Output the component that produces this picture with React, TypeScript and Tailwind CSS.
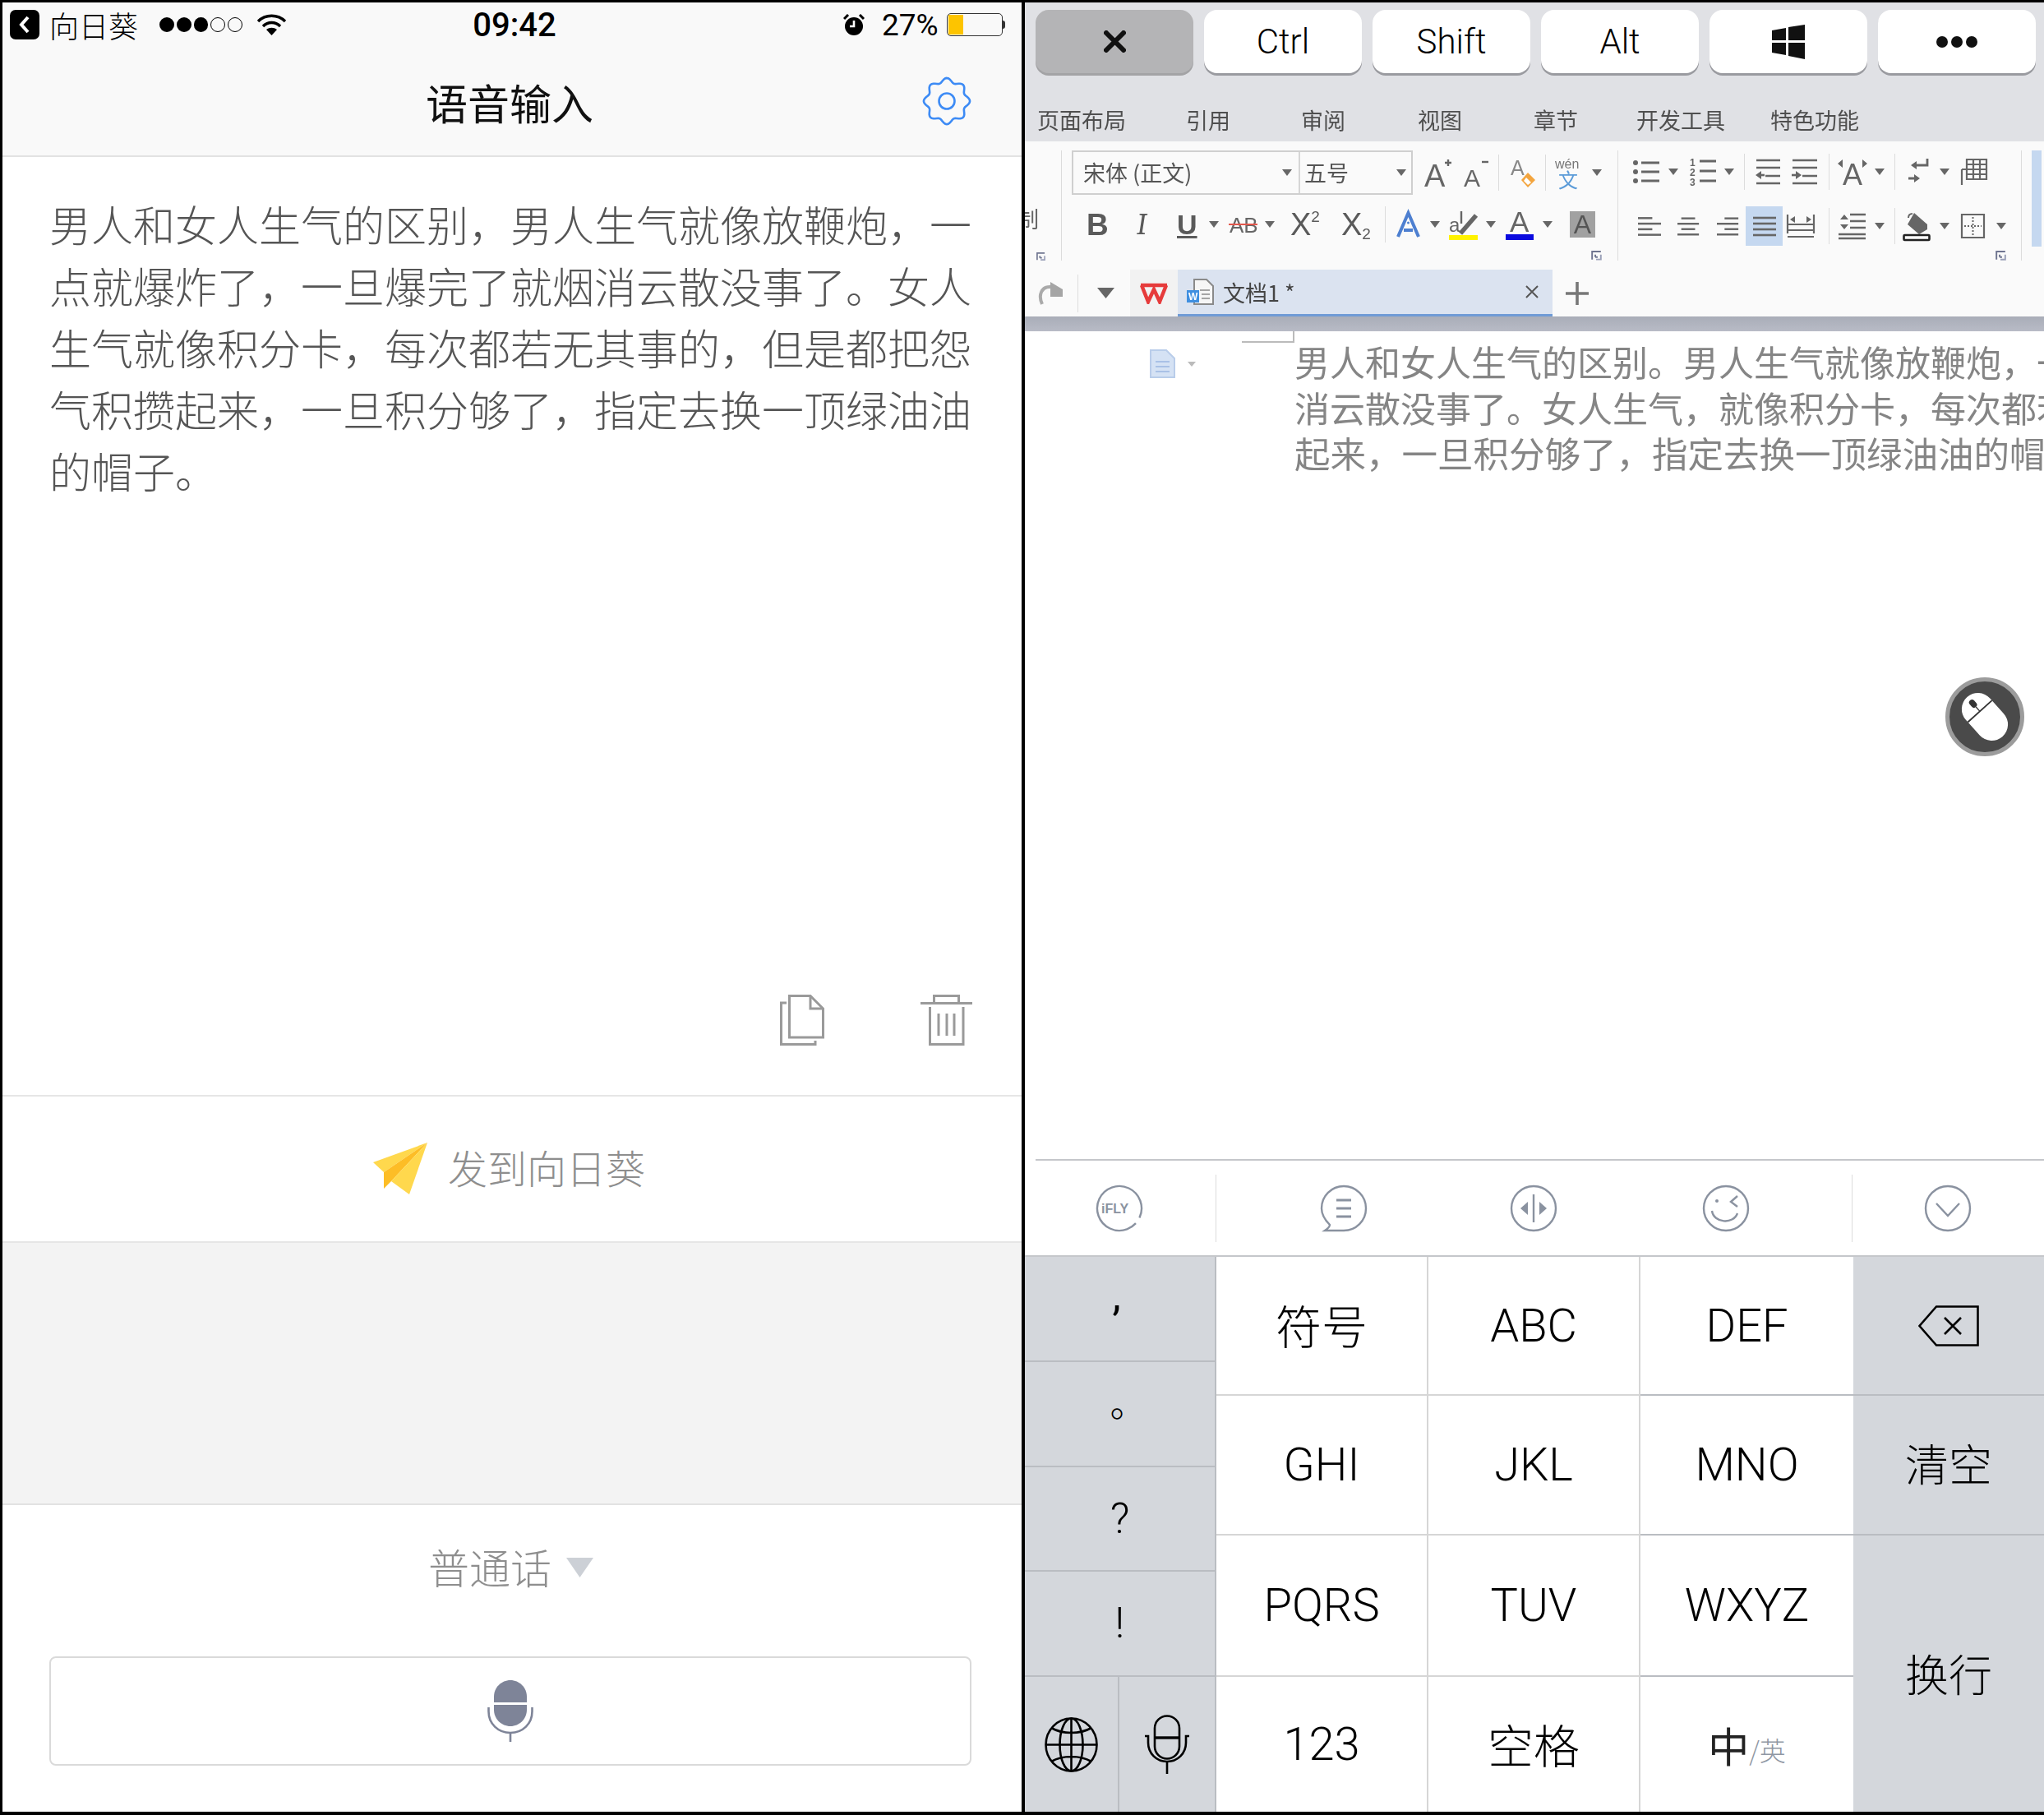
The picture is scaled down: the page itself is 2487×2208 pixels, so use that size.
import React from 'react'

const cjk = "[font-family:'Noto_Sans_CJK_SC',sans-serif]"
const keyFont = "[font-family:Roboto,'Noto_Sans_CJK_SC',sans-serif] font-light"

// gear outline with eight soft teeth
const gearPath = Array.from({ length: 96 }, (_, i) => {
  const t = (i / 96) * Math.PI * 2
  const r = 25.5 + 2.6 * Math.cos(8 * t)
  return `${i === 0 ? 'M' : 'L'}${(30 + r * Math.sin(t)).toFixed(2)} ${(30 - r * Math.cos(t)).toFixed(2)}`
}).join(' ') + 'Z'

const G = '#666666'

function Arrow({ className = '' }: { className?: string }) {
  return (
    <svg width="12" height="8" viewBox="0 0 12 8" className={`shrink-0 ${className}`}>
      <path d="M0 0H12L6 8Z" fill={G} />
    </svg>
  )
}

function Divider({ className = '' }: { className?: string }) {
  return <div className={`w-px h-[44px] bg-[#dcdcdc] shrink-0 ${className}`} />
}

function Launcher({ className = '' }: { className?: string }) {
  return (
    <svg width="13" height="12" viewBox="0 0 13 12" className={className}>
      <path d="M1 11V1H12M5 8V5M5 8H8" stroke="#6f7590" strokeWidth="2" fill="none" />
      <path d="M12 5V11H6" stroke="#9aa0b8" strokeWidth="2" fill="none" />
    </svg>
  )
}

function Glyph({ w, h, children, className = '' }: { w: number; h: number; children: React.ReactNode; className?: string }) {
  return (
    <svg width={w} height={h} viewBox={`0 0 ${w} ${h}`} className={`shrink-0 overflow-visible ${className}`}>
      {children}
    </svg>
  )
}

function TextLines({ rows, className = '' }: { rows: number[][]; className?: string }) {
  return (
    <Glyph w={30} h={26} className={className}>
      {rows.map((r, i) => (
        <path key={i} d={`M${r[0]} ${r[2]}H${r[1]}`} stroke={G} strokeWidth="2.6" />
      ))}
    </Glyph>
  )
}

function CircleIcon({ children, className = '' }: { children: React.ReactNode; className?: string }) {
  return (
    <svg width="58" height="58" viewBox="0 0 58 58" fill="none" stroke="#8a92a0" strokeWidth="2.4" className={`shrink-0 ${className}`}>
      {children}
    </svg>
  )
}

function Key({ children, className = '' }: { children: React.ReactNode; className?: string }) {
  return <div className={`flex items-center justify-center text-black ${className}`}>{children}</div>
}

function StatusBar() {
  return (
    <div className="h-[54px] flex items-center text-black text-[36px] leading-none">
      <div className="ml-[9px] w-[36px] h-[36px] rounded-[7px] bg-black flex items-center justify-center">
        <svg width="14" height="24" viewBox="0 0 14 24" fill="none" stroke="#fff" strokeWidth="4">
          <path d="M11 3L3 12L11 21" />
        </svg>
      </div>
      <span className={`ml-[12px] w-[110px] ${cjk} font-light whitespace-nowrap`}>向日葵</span>
      <div className="ml-[24px] w-[101px] flex gap-[3px]">
        {[0, 1, 2].map(i => <span key={i} className="w-[18px] h-[18px] rounded-full bg-black" />)}
        {[0, 1].map(i => <span key={i} className="w-[18px] h-[18px] rounded-full border border-black" />)}
      </div>
      <svg width="37" height="27" viewBox="0 0 37 27" fill="none" stroke="#000" strokeWidth="3.4" className="ml-[17px]">
        <path d="M2 9C11 0 26 0 35 9" />
        <path d="M8 15C14 9 23 9 29 15" />
        <path d="M18.5 26L12 19C16 16 21 16 25 19Z" fill="#000" stroke="none" />
      </svg>
      <span className="ml-[225px] w-[104px] pt-[2px] font-medium [font-family:Roboto,sans-serif] text-[40px] text-center whitespace-nowrap">09:42</span>
      <svg width="26" height="27" viewBox="0 0 26 27" className="ml-[348px]">
        <circle cx="13" cy="15" r="11" fill="#000" />
        <path d="M13 8V15H8" stroke="#fff" strokeWidth="2.6" fill="none" />
        <path d="M1 6L6 1M25 6L20 1" stroke="#000" strokeWidth="3" />
      </svg>
      <span className="ml-[21px] w-[68px] [font-family:Roboto,sans-serif] font-normal text-[37px] text-center whitespace-nowrap">27%</span>
      <div className="ml-[11px] flex items-center">
        <div className="w-[68px] h-[28px] rounded-[5px] border-[1.5px] border-[#333] p-[1px] flex">
          <div className="w-[18px] bg-[#fdc400]" />
        </div>
        <div className="w-[3px] h-[10px] bg-[#333] rounded-r-sm" />
      </div>
    </div>
  )
}

function LeftPanel() {
  return (
    <div className="w-[1240px] h-[2201px] bg-white flex flex-col shrink-0">
      <div className="h-[188px] bg-[#f9f9f9] border-b-2 border-[#e2e2e2] shrink-0">
        <StatusBar />
        <div className="h-[132px] flex items-center">
          <h1 className={`ml-[515px] w-[204px] pt-[2px] text-[51px] leading-none text-[#111] whitespace-nowrap ${cjk}`}>语音输入</h1>
          <svg width="60" height="60" viewBox="0 0 60 60" fill="none" stroke="#3d8bf5" strokeWidth="2.6" className="ml-[400px]">
            <path d={gearPath} />
            <circle cx="30" cy="30" r="9.5" />
          </svg>
        </div>
      </div>

      <div className="h-[1141px] flex flex-col shrink-0">
        <p className={`ml-[57px] mt-[44px] w-[1124px] text-[51px] leading-[75px] text-[#555] font-light ${cjk}`}>
          男人和女人生气的区别，男人生气就像放鞭炮，一点就爆炸了，一旦爆完了就烟消云散没事了。女人生气就像积分卡，每次都若无其事的，但是都把怨气积攒起来，一旦积分够了，指定去换一顶绿油油的帽子。
        </p>
        <div className="mt-auto mb-[60px] flex items-end">
          <svg width="54" height="62" viewBox="0 0 54 62" fill="none" stroke="#9a9a9a" strokeWidth="3" className="ml-[946px]">
            <path d="M11.5 1.5H37L52.5 17V52H11.5Z" />
            <path d="M37 1.5V17H52.5" />
            <path d="M8 10H1.5V60.5H43V56" />
          </svg>
          <svg width="63" height="62" viewBox="0 0 63 62" fill="none" stroke="#9a9a9a" strokeWidth="3" className="ml-[117px]">
            <path d="M0 10.5H63" />
            <path d="M16.5 10V1.5H46.5V10" />
            <path d="M11.5 15V60.5H52V15" />
            <path d="M22 23V50M32 23V50M41 23V50" />
          </svg>
        </div>
      </div>

      <div className="h-[180px] border-t-2 border-b-2 border-[#e6e6e6] flex items-center justify-center pr-[7px] shrink-0">
        <svg width="66" height="63" viewBox="0 0 66 63" className="mr-[25px] mb-[2px]">
          <path d="M66 0L0 24L13 36Z" fill="#ffd84d" />
          <path d="M66 0L13 36V56L22 47Z" fill="#fdbd26" />
          <path d="M66 0L22 47L44 63Z" fill="#ffd84d" />
        </svg>
        <span className={`text-[48px] leading-none text-[#8e8e8e] font-light whitespace-nowrap pb-[7px] ${cjk}`}>发到向日葵</span>
      </div>

      <div className="h-[317px] bg-[#f3f3f3] shrink-0" />

      <div className="flex-1 border-t-2 border-[#e2e2e2] flex flex-col">
        <div className="h-[184px] flex items-center justify-center pb-[24px] pr-[3px]">
          <span className={`text-[50px] leading-none text-[#8e8e8e] font-light whitespace-nowrap pb-[12px] ${cjk}`}>普通话</span>
          <svg width="33" height="24" viewBox="0 0 33 24" className="ml-[18px] mb-[8px]">
            <path d="M0 0H33L16.5 24Z" fill="#ccd0d6" />
          </svg>
        </div>
        <div className="ml-[57px] w-[1122px] h-[133px] border-2 border-[#dadada] rounded-[8px] flex items-center justify-center">
          <svg width="56" height="75" viewBox="0 0 56 75" fill="none">
            <path d="M8 27V20C8 9 17 0 28 0S48 9 48 20V27Z" fill="#7e8498" />
            <path d="M8 30V36C8 47 17 56 28 56S48 47 48 36V30Z" fill="#7e8498" />
            <path d="M1.5 33V38C1.5 53 13 64 28 64S54.5 53 54.5 38V33" stroke="#7e8498" strokeWidth="2.6" />
            <path d="M28 64V75" stroke="#7e8498" strokeWidth="2.6" />
          </svg>
        </div>
      </div>
    </div>
  )
}

function FontGroup() {
  return (
    <div className="w-[676px] h-[134px] flex flex-col shrink-0 text-[#5a5a5a]">
      <div className="h-[54px] flex items-center">
        <div className="ml-[12px] w-[415px] h-[54px] border-2 border-[#cfcfcf] flex items-center shrink-0">
          <div className={`w-[276px] h-full border-r-2 border-[#d6d6d6] flex items-center pl-[12px] text-[27px] text-[#555] ${cjk}`}>
            <span className="whitespace-nowrap">宋体 (正文)</span>
            <Arrow className="ml-auto mr-[8px]" />
          </div>
          <div className={`flex-1 flex items-center pl-[5px] text-[27px] text-[#555] ${cjk}`}>
            <span className="whitespace-nowrap">五号</span>
            <Arrow className="ml-auto mr-[6px]" />
          </div>
        </div>
        <Glyph w={32} h={36} className="ml-[15px]">
          <text x="-1" y="35" fontSize="38" fill={G} fontFamily="Liberation Sans">A</text>
          <path d="M24 6H32M28 2V10" stroke={G} strokeWidth="2.4" />
        </Glyph>
        <Glyph w={30} h={36} className="ml-[15px]">
          <text x="0" y="35" fontSize="30" fill={G} fontFamily="Liberation Sans">A</text>
          <path d="M22 5H30" stroke={G} strokeWidth="2.4" />
        </Glyph>
        <Divider className="ml-[12px]" />
        <Glyph w={30} h={36} className="ml-[14px]">
          <text x="0" y="21" fontSize="25" fill="#888" fontFamily="Liberation Sans">A</text>
          <path d="M21 18L30 27L21 36L13 27Z" fill="#f3a53f" />
          <path d="M19 24L25 30L21 33L16 28Z" fill="#fff" />
        </Glyph>
        <Divider className="ml-[12px]" />
        <Glyph w={32} h={38} className="ml-[11px]">
          <text x="0" y="14" fontSize="16" fill="#777" fontFamily="Liberation Sans">wén</text>
          <text x="4" y="37" fontSize="24" fill="#5b9bd8" fontFamily="Noto Sans CJK SC">文</text>
        </Glyph>
        <Arrow className="ml-[13px]" />
      </div>
      <div className="mt-[13px] h-[48px] flex items-center [font-family:'Liberation_Sans',sans-serif]">
        <span className="ml-[30px] w-[22px] text-[37px] font-bold leading-none">B</span>
        <span className="ml-[39px] w-[18px] text-[37px] italic font-serif leading-none">I</span>
        <span className="ml-[31px] w-[24px] text-[34px] font-bold leading-none underline underline-offset-2">U</span>
        <Arrow className="ml-[15px]" />
        <Glyph w={35} h={30} className="ml-[12px]">
          <text x="1" y="25" fontSize="26" fill={G} fontFamily="Liberation Sans">AB</text>
          <path d="M0 15H35" stroke="#e2574c" strokeWidth="2" />
        </Glyph>
        <Arrow className="ml-[9px]" />
        <span className="ml-[19px] w-[35px] text-[38px] leading-none whitespace-nowrap">X<sup className="text-[19px] -top-[16px]">2</sup></span>
        <span className="ml-[27px] w-[34px] text-[38px] leading-none whitespace-nowrap">X<sub className="text-[19px]">2</sub></span>
        <Divider className="ml-[19px]" />
        <Glyph w={33} h={34} className="ml-[11px]">
          <path d="M4 32L16.5 3L29 32M11 24H22" stroke="#4d7fd0" strokeWidth="4" fill="none" />
          <circle cx="16.5" cy="15" r="1.5" fill="#4d7fd0" />
        </Glyph>
        <Arrow className="ml-[10px]" />
        <Glyph w={35} h={38} className="ml-[11px]">
          <text x="0" y="28" fontSize="24" fill={G} fontFamily="Liberation Sans">a</text>
          <path d="M14 30L33 8" stroke={G} strokeWidth="5.5" />
          <path d="M15 3V18" stroke={G} strokeWidth="2.4" />
          <path d="M0 32H35V38H0Z" fill="#fff200" />
        </Glyph>
        <Arrow className="ml-[10px]" />
        <Glyph w={34} h={38} className="ml-[12px]">
          <text x="5" y="28" fontSize="35" fill={G} fontFamily="Liberation Sans">A</text>
          <path d="M0 31H34V38H0Z" fill="#0a0adf" />
        </Glyph>
        <Arrow className="ml-[11px]" />
        <div className="ml-[21px] w-[31px] h-[32px] bg-[#a1a1a1] flex items-center justify-center text-[32px] leading-none text-[#555]">A</div>
      </div>
      <Launcher className="mt-[9px] ml-[644px]" />
    </div>
  )
}

function ParaGroup() {
  const al = (rows: number[][], className: string) => <TextLines rows={rows} className={className} />
  return (
    <div className="w-[490px] h-[134px] flex flex-col shrink-0">
      <div className="h-[54px] flex items-center">
        <Glyph w={33} h={32} className="ml-[17px]">
          <path d="M11 5H33M11 16H33M11 27H33" stroke={G} strokeWidth="2.8" />
          <circle cx="4" cy="5" r="3" fill={G} /><circle cx="4" cy="16" r="3" fill={G} /><circle cx="4" cy="27" r="3" fill={G} />
        </Glyph>
        <Arrow className="ml-[11px]" />
        <Glyph w={33} h={36} className="ml-[13px]">
          <path d="M13 5H33M13 17H33M13 29H33" stroke={G} strokeWidth="2.8" />
          <text x="1" y="11" fontSize="12" fontWeight="bold" fill={G} fontFamily="Liberation Sans">1</text>
          <text x="1" y="23" fontSize="12" fontWeight="bold" fill={G} fontFamily="Liberation Sans">2</text>
          <text x="1" y="35" fontSize="12" fontWeight="bold" fill={G} fontFamily="Liberation Sans">3</text>
        </Glyph>
        <Arrow className="ml-[10px]" />
        <Divider className="ml-[12px]" />
        <Glyph w={30} h={32} className="ml-[13px]">
          <path d="M1 2H30M1 11H30M12 21H30M1 30H30" stroke={G} strokeWidth="2.6" />
          <path d="M0 20L7 15V25Z" fill={G} /><path d="M6 20H11" stroke={G} strokeWidth="2.6" />
        </Glyph>
        <Glyph w={31} h={32} className="ml-[14px]">
          <path d="M1 2H31M1 11H31M13 21H31M1 30H31" stroke={G} strokeWidth="2.6" />
          <path d="M12 20L5 15V25Z" fill={G} /><path d="M0 20H6" stroke={G} strokeWidth="2.6" />
        </Glyph>
        <Divider className="ml-[14px]" />
        <Glyph w={36} h={34} className="ml-[10px]">
          <text x="6" y="33" fontSize="36" fill={G} fontFamily="Liberation Sans">A</text>
          <path d="M0 7L6 2V12ZM36 7L30 2V12Z" fill={G} />
        </Glyph>
        <Arrow className="ml-[9px]" />
        <Divider className="ml-[12px]" />
        <Glyph w={24} h={34} className="ml-[16px]">
          <path d="M23 1V9H9M0 25H8" stroke={G} strokeWidth="2.8" fill="none" />
          <path d="M3 9L10 4V14ZM14 25L7 20V30Z" fill={G} />
        </Glyph>
        <Arrow className="ml-[14px]" />
        <Glyph w={32} h={34} className="ml-[14px]">
          <path d="M7 2H31V26H7V2ZM1 14H31M1 14V33M7 14V26M15 2V26M23 2V26M7 8H31M7 20H31" stroke={G} strokeWidth="2.2" fill="none" />
        </Glyph>
      </div>
      <div className="mt-[16px] h-[48px] flex items-center">
        {al([[0, 18, 3], [0, 29, 10], [0, 18, 17], [0, 29, 24]], 'ml-[24px] w-[29px]')}
        {al([[5, 23, 3], [0, 28, 10], [5, 23, 17], [0, 28, 24]], 'ml-[19px] w-[28px]')}
        {al([[10, 28, 3], [0, 28, 10], [10, 28, 17], [0, 28, 24]], 'ml-[20px] w-[28px]')}
        <div className="ml-[7px] w-[45px] h-[48px] bg-[#c5d8f0] flex items-center justify-center shrink-0">
          <TextLines rows={[[1, 29, 3], [1, 29, 10], [1, 29, 17], [1, 29, 24]]} />
        </div>
        <Glyph w={34} h={30} className="ml-[5px]">
          <path d="M1 1V24M33 1V24M1 28H33M1 20H33M1 13H33" stroke={G} strokeWidth="2.2" />
          <path d="M4 7L10 3V11ZM30 7L24 3V11Z" fill={G} />
        </Glyph>
        <Divider className="ml-[17px]" />
        <Glyph w={33} h={32} className="ml-[11px]">
          <path d="M14 2H33M14 10H33M14 18H33M0 26H33M0 31H33" stroke={G} strokeWidth="2.4" />
          <path d="M2 8L7 2L12 8ZM2 14L7 20L12 14Z" fill={G} />
        </Glyph>
        <Arrow className="ml-[11px]" />
        <Divider className="ml-[12px]" />
        <Glyph w={35} h={36} className="ml-[9px]">
          <path d="M14 2L30 16V22L20 28L6 16Z" fill={G} />
          <path d="M7 8C7 4 10 3 12 3" stroke={G} strokeWidth="2" fill="none" />
          <rect x="1.5" y="29" width="31" height="6" rx="1" fill="#fff" stroke="#222" strokeWidth="2.6" />
        </Glyph>
        <Arrow className="ml-[10px]" />
        <Glyph w={29} h={30} className="ml-[14px]">
          <path d="M1 1H28V29H1Z" stroke={G} strokeWidth="2.2" fill="none" />
          <path d="M14.5 4V26M4 15H25" stroke={G} strokeWidth="2" strokeDasharray="2 2" />
        </Glyph>
        <Arrow className="ml-[14px]" />
      </div>
      <Launcher className="mt-[6px] ml-[459px]" />
    </div>
  )
}

function TabBar() {
  return (
    <div className={`h-[57px] flex items-center shrink-0 text-[#555] ${cjk}`}>
      <Glyph w={29} h={28} className="ml-[17px]">
        <path d="M4 27C-1 16 3 5 15 6" stroke="#aaa" strokeWidth="4" fill="none" />
        <path d="M14 0L29 9V18H14Z" fill="#a5a5a5" />
      </Glyph>
      <div className="ml-[18px] w-px h-[46px] bg-[#dedede]" />
      <svg width="21" height="13" viewBox="0 0 21 13" className="ml-[23px]"><path d="M0 0H21L10.5 13Z" fill={G} /></svg>
      <div className="ml-[19px] w-[58px] h-full bg-[#f2f2f2] flex items-center justify-center">
        <svg width="36" height="26" viewBox="0 0 36 26" fill="none" stroke="#e63b3b" strokeWidth="4.5">
          <path d="M2 3H34M3 3L11 23L18 8L25 23L33 3" />
        </svg>
      </div>
      <div className="w-[456px] h-full bg-[#dbe3f0] border-b-[3px] border-[#6f9bd6] flex items-center">
        <Glyph w={33} h={33} className="ml-[11px]">
          <path d="M9 1H24L32 9V31H9Z" fill="#f6f6f6" stroke="#8a8a8a" strokeWidth="2" />
          <path d="M16 14H28M18 19H28M18 24H28" stroke="#8a8a8a" strokeWidth="1.5" />
          <rect x="0" y="14" width="15" height="15" fill="#3f8fe0" />
          <text x="2" y="26" fontSize="12" fontWeight="bold" fill="#fff" fontFamily="Liberation Sans">W</text>
        </Glyph>
        <span className="ml-[11px] text-[27px] leading-none whitespace-nowrap text-[#444]">文档1 *</span>
        <svg width="18" height="18" viewBox="0 0 18 18" stroke="#555" strokeWidth="2" className="ml-auto mr-[16px]">
          <path d="M2 2L16 16M16 2L2 16" />
        </svg>
      </div>
      <svg width="28" height="28" viewBox="0 0 28 28" stroke="#777" strokeWidth="3.6" className="ml-[16px]">
        <path d="M14 0V28M0 14H28" />
      </svg>
    </div>
  )
}

function Keyboard() {
  const border = 'border-b-2 border-[#babdc2]'
  const side = `${border} flex items-center justify-center text-black bg-[#d4d7dc]`
  const cell = 'border-r-2 border-[#d6d6d6] text-[56px]'
  return (
    <div className={`h-[675px] flex shrink-0 ${keyFont}`}>
      <div className="w-[233px] flex flex-col bg-[#d4d7dc] border-r-2 border-[#babdc2] text-[52px] shrink-0">
        <div className={`h-[128px] ${side} pb-[30px] pr-[8px] font-normal`}>,</div>
        <div className={`h-[128px] ${side}`}><span className={`${cjk} pl-[20px] pb-[30px] text-[44px]`}>。</span></div>
        <div className={`h-[127px] ${side}`}>?</div>
        <div className={`h-[128px] ${side}`}>!</div>
        <div className="flex-1 flex">
          <div className="w-[115px] border-r-2 border-[#babdc2] flex items-center justify-center">
            <svg width="65" height="67" viewBox="0 0 65 67" fill="none" stroke="#000" strokeWidth="2.6">
              <ellipse cx="32.5" cy="33.5" rx="31" ry="32" />
              <ellipse cx="32.5" cy="33.5" rx="14" ry="32" />
              <path d="M32.5 1.5V65.5M1.5 33.5H63.5M8 13C22 21 43 21 57 13M8 54C22 46 43 46 57 54" />
            </svg>
          </div>
          <div className="flex-1 flex items-center justify-center">
            <svg width="56" height="72" viewBox="0 0 56 72" fill="none" stroke="#000" strokeWidth="2.6">
              <rect x="13" y="1.5" width="30" height="52" rx="15" />
              <path d="M13 28H43" strokeWidth="3.4" />
              <path d="M1 26H5V34C5 47 15 57 28 57S51 47 51 34V26H55" />
              <path d="M28 57V72" />
            </svg>
          </div>
        </div>
      </div>

      <div className="w-[775px] grid grid-cols-[258px_258px_259px] grid-rows-[169px_170px_172px_164px] bg-white shrink-0">
        <Key className={`${cell} ${border} ${cjk} pb-[4px]`}>符号</Key>
        <Key className={`${cell} ${border}`}>ABC</Key>
        <Key className={`${border} text-[56px]`}>DEF</Key>
        <Key className={`${cell} ${border}`}>GHI</Key>
        <Key className={`${cell} ${border}`}>JKL</Key>
        <Key className={`${border} text-[56px]`}>MNO</Key>
        <Key className={`${cell} ${border}`}>PQRS</Key>
        <Key className={`${cell} ${border}`}>TUV</Key>
        <Key className={`${border} text-[56px]`}>WXYZ</Key>
        <Key className={cell}>123</Key>
        <Key className={`${cell} ${cjk} pb-[2px]`}>空格</Key>
        <Key className={cjk}>
          <span className="text-[50px] leading-none font-normal text-[#222]">中</span>
          <span className="text-[32px] leading-none text-[#8f97a3] pt-[12px]">/英</span>
        </Key>
      </div>

      <div className="flex-1 flex flex-col bg-[#d4d7dc] text-[53px]">
        <div className={`h-[169px] ${side}`}>
          <svg width="74" height="50" viewBox="0 0 74 50" fill="none" stroke="#000" strokeWidth="2.6">
            <path d="M22 1.5H72.5V48.5H22L1.5 25Z" />
            <path d="M32 15L52 35M52 15L32 35" />
          </svg>
        </div>
        <div className={`h-[170px] ${side} ${cjk} pb-[4px]`}>清空</div>
        <div className={`flex-1 flex items-center justify-center text-black ${cjk}`}>换行</div>
      </div>
    </div>
  )
}

function Toolbar() {
  return (
    <div className="h-[119px] bg-white border-b-2 border-[#c5c7cb] flex flex-col shrink-0">
      <div className="ml-[13px] h-[2px] bg-[#c5c7cb]" />
      <div className="flex-1 flex items-center">
        <div className="w-[232px] flex justify-center pr-[2px]">
          <CircleIcon>
            <circle cx="29" cy="29" r="27" strokeDasharray="148 8" transform="rotate(70 29 29)" />
            <text x="7" y="35" fontSize="16" fontWeight="bold" fill="#8a92a0" stroke="none" fontFamily="Liberation Sans">iFLY</text>
          </CircleIcon>
        </div>
        <div className="w-px h-[82px] bg-[#dcdcdc]" />
        <CircleIcon className="ml-[126px]">
          <path d="M12 49C7 44 2 37 2 29C2 14 14 2 29 2S56 14 56 29S44 56 29 56H6C9 54 12 52 12 49Z" />
          <path d="M20 19H38M20 29H38M20 39H38" strokeWidth="3" />
        </CircleIcon>
        <CircleIcon className="ml-[173px]">
          <circle cx="29" cy="29" r="27" />
          <path d="M29 12V46" />
          <path d="M22 21V37L13 29ZM36 21V37L45 29Z" fill="#8a92a0" stroke="none" />
        </CircleIcon>
        <CircleIcon className="ml-[176px]">
          <circle cx="29" cy="29" r="27" />
          <circle cx="18" cy="20" r="2" fill="#8a92a0" stroke="none" />
          <path d="M43 14L35 21L43 27" />
          <path d="M12 32C14 47 38 49 43 35" />
        </CircleIcon>
        <div className="ml-[124px] w-px h-[82px] bg-[#dcdcdc]" />
        <CircleIcon className="ml-[87px]">
          <circle cx="29" cy="29" r="27" />
          <path d="M15 23L29 38L43 23" />
        </CircleIcon>
      </div>
    </div>
  )
}

function RightPanel() {
  const keyCls = 'w-[192px] h-[77px] rounded-[16px] flex items-center justify-center text-[42px] shrink-0 [font-family:Roboto,sans-serif] font-light shadow-[0_3px_0_#9a9ba0]'
  return (
    <div className="relative ml-[4px] flex-1 h-[2201px] bg-white flex flex-col overflow-hidden">
      <div className="bg-[#e0e1e5] h-[169px] shrink-0">
        <div className="pt-[9px] pl-[13px] flex gap-[13px]">
          <div className={`${keyCls} bg-[#b4b4b6] shadow-[0_3px_0_#a3a3a5]`}>
            <svg width="27" height="27" viewBox="0 0 27 27" stroke="#111" strokeWidth="6" strokeLinecap="round"><path d="M3 3L24 24M24 3L3 24" /></svg>
          </div>
          <div className={`${keyCls} bg-white`}>Ctrl</div>
          <div className={`${keyCls} bg-white`}>Shift</div>
          <div className={`${keyCls} bg-white`}>Alt</div>
          <div className={`${keyCls} bg-white`}>
            <svg width="40" height="42" viewBox="0 0 40 42" fill="#111"><path d="M0 7L17 4V19H0ZM20 3L40 0V19H20ZM0 22H17V37L0 34ZM20 22H40V42L20 38Z" /></svg>
          </div>
          <div className={`${keyCls} bg-white`}>
            <div className="flex gap-[4px]">
              <span className="w-[14px] h-[14px] rounded-full bg-[#111]" />
              <span className="w-[14px] h-[14px] rounded-full bg-[#111]" />
              <span className="w-[14px] h-[14px] rounded-full bg-[#111]" />
            </div>
          </div>
        </div>
        <div className={`h-[80px] pt-[33px] flex items-center text-[27px] leading-none text-[#4f4f4f] whitespace-nowrap blur-[0.4px] ${cjk}`}>
          <span className="ml-[15px] w-[108px]">页面布局</span>
          <span className="ml-[73px] w-[54px]">引用</span>
          <span className="ml-[86px] w-[54px]">审阅</span>
          <span className="ml-[88px] w-[54px]">视图</span>
          <span className="ml-[87px] w-[54px]">章节</span>
          <span className="ml-[71px] w-[108px]">开发工具</span>
          <span className="ml-[55px] w-[108px]">特色功能</span>
        </div>
      </div>

      <div className="bg-[#fafafa] shrink-0 blur-[0.4px]">
        <div className="h-[156px] pt-[11px] flex">
          <div className="w-[44px] h-[134px] flex flex-col shrink-0 overflow-hidden">
            <span className={`mt-[68px] -ml-[10px] text-[27px] leading-[30px] text-[#666] ${cjk}`}>制</span>
            <Launcher className="mt-[26px] ml-[13px]" />
          </div>
          <div className="w-px h-[134px] bg-[#dcdcdc] shrink-0" />
          <FontGroup />
          <div className="w-px h-[134px] bg-[#dcdcdc] shrink-0" />
          <ParaGroup />
          <div className="w-px h-[134px] bg-[#dcdcdc] shrink-0" />
          <div className="ml-[12px] w-[12px] h-[117px] bg-[#c5d8f0] shrink-0" />
        </div>
        <TabBar />
      </div>
      <div className="h-[18px] bg-gradient-to-b from-[#a9adb8] to-[#b8bbc6] shrink-0" />

      <div className="h-[1007px] flex bg-white shrink-0">
        <div className="w-[328px] flex flex-col shrink-0">
          <div className="ml-[264px] w-[64px] h-[14px] border-b-2 border-r-2 border-[#bbb]" />
          <div className="ml-[152px] mt-[8px] flex items-center">
            <svg width="31" height="35" viewBox="0 0 31 35">
              <path d="M1 1H20L30 11V34H1Z" fill="#d5e2f4" stroke="#b9cdea" strokeWidth="2" />
              <path d="M7 15H24M7 21H24M7 27H24" stroke="#a9c1e6" strokeWidth="2" />
            </svg>
            <svg width="10" height="6" viewBox="0 0 10 6" className="ml-[15px]"><path d="M0 0H10L5 6Z" fill="#bbb" /></svg>
          </div>
        </div>
        <div className={`flex-1 pt-[8px] text-[43px] leading-[56px] text-[#858585] whitespace-nowrap overflow-hidden blur-[0.3px] ${cjk}`}>
          <div>男人和女人生气的区别。男人生气就像放鞭炮，一</div>
          <div>消云散没事了。女人生气，就像积分卡，每次都若</div>
          <div className="text-[43.5px]">起来，一旦积分够了，指定去换一顶绿油油的帽子</div>
        </div>
      </div>

      <Toolbar />
      <Keyboard />

      <div className="absolute right-[24px] top-[821px] w-[96px] h-[96px] rounded-full bg-[#4a4a4a] border-[5px] border-[#9c9c9c]">
        <svg width="86" height="86" viewBox="0 0 96 96" className="block">
          <g transform="rotate(-42 48 48)">
            <rect x="26" y="12" width="44" height="72" rx="22" fill="#fff" />
            <path d="M26 38H70" stroke="#333" strokeWidth="2" />
            <rect x="44" y="18" width="8" height="12" rx="4" fill="#333" />
            <path d="M48 30V38" stroke="#333" strokeWidth="1.5" />
          </g>
        </svg>
      </div>
    </div>
  )
}

export default function App() {
  return (
    <div className="w-[2487px] h-[2208px] bg-black pt-[3px] pl-[3px] flex overflow-hidden [font-family:'Liberation_Sans','Noto_Sans_CJK_SC',sans-serif]">
      <LeftPanel />
      <RightPanel />
    </div>
  )
}
